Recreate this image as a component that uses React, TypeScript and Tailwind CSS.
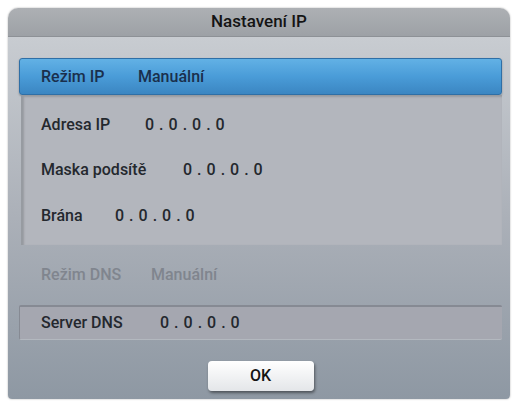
import React from 'react';

const font = { fontFamily: 'Roboto, "Liberation Sans", Arial, sans-serif' };

interface FieldProps {
    label: string;
    value: string;
    labelW: string;
}

const Field = ({ label, value, labelW }: FieldProps) => (
    <div className="flex items-center">
        <span className={`${labelW} shrink-0`}>{label}</span>
        <span className="tracking-[5px]">{value}</span>
    </div>
);

export default function App() {
    return (
        <div className="w-[515px] h-[404px] bg-white pt-[8px] pl-[8px]" style={font}>
            <div className="w-[502px] h-[391px] flex flex-col rounded-t-[10px] rounded-b-[4px] overflow-hidden shadow-[0_0_2px_rgba(0,0,0,0.35)]">
                {/* Title */}
                <div className="h-[29px] shrink-0 flex items-center justify-center bg-gradient-to-b from-[#adb0b4] to-[#9da1a6] border-b border-[#8d9196] text-[17px] font-medium text-[#141414]">
                    Nastavení IP
                </div>

                {/* Body */}
                <div className="flex-1 flex flex-col pl-[11px] pr-[8px] pt-[21px] bg-gradient-to-b from-[#c8ccd1] via-[#abb0b8] to-[#8e98a3] text-[16px] font-medium">
                    <div className="h-[37px] shrink-0 flex items-center pl-[21px] rounded-[3px] bg-gradient-to-b from-[#62b1e5] via-[#4a9cd8] to-[#3b86c2] border border-[#2f6fa6] shadow-[0_1px_2px_rgba(0,0,0,0.3)] text-[#1a2f4c]">
                        <span className="w-[97px] shrink-0">Režim IP</span>
                        <span>Manuální</span>
                    </div>

                    <div className="h-[150px] shrink-0 flex flex-col justify-around py-[6px] pl-[18px] ml-[2px] bg-[#b3b6bd] border-l-2 border-t border-[#979ba1] shadow-[inset_1px_1px_2px_rgba(0,0,0,0.15)] text-[#24282e]">
                        <Field label="Adresa IP" value="0.0.0.0" labelW="w-[104px]" />
                        <Field label="Maska podsítě" value="0.0.0.0" labelW="w-[142px]" />
                        <Field label="Brána" value="0.0.0.0" labelW="w-[74px]" />
                    </div>

                    <div className="h-[60px] shrink-0 flex items-center pl-[22px] text-[#80858e]">
                        <span className="w-[110px] shrink-0">Režim DNS</span>
                        <span>Manuální</span>
                    </div>

                    <div className="h-[35px] shrink-0 flex items-center pl-[21px] bg-[#a5a7b0] border-t-2 border-[#868a93] border-l border-b border-b-[#b3b8bf] rounded-[2px] text-[#24282e]">
                        <Field label="Server DNS" value="0.0.0.0" labelW="w-[119px]" />
                    </div>

                    <div className="flex-1 flex items-start justify-center pt-[21px]">
                        <button className="w-[106px] h-[30px] rounded-[4px] bg-gradient-to-b from-[#ffffff] to-[#e4e6e9] shadow-[1px_2px_3px_rgba(0,0,0,0.45)] text-[16px] font-medium text-[#141414]">
                            OK
                        </button>
                    </div>
                </div>
            </div>
        </div>
    );
}
